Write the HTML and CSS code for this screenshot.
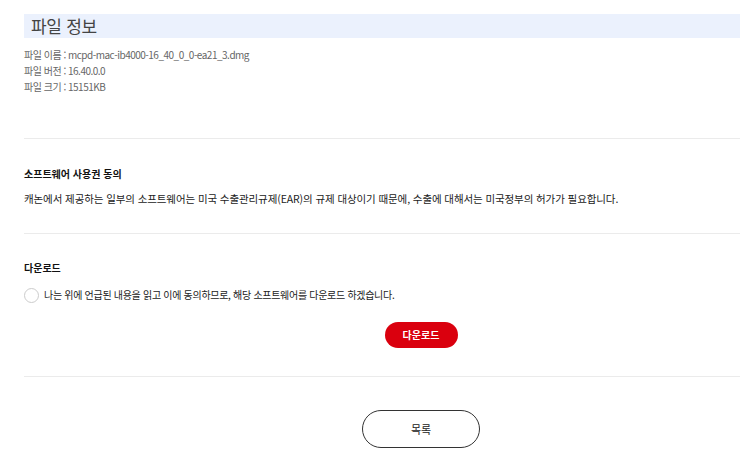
FILE: index.html
```html
<!DOCTYPE html>
<html lang="ko">
<head>
<meta charset="UTF-8">
<meta name="viewport" content="width=device-width, initial-scale=1.0">
<link rel="stylesheet" href="styles.css">
<title>파일 정보</title>
</head>
<body>
<div class="wrap">

  <!-- 파일 정보 -->
  <h2 class="title">파일 정보</h2>
  <ul class="info">
    <li>파일 이름 : mcpd-mac-ib4000-16_40_0_0-ea21_3.dmg</li>
    <li>파일 버전 : 16.40.0.0</li>
    <li>파일 크기 : 15151KB</li>
  </ul>

  <!-- 사용권 동의 -->
  <div class="section">
    <h3 class="sub">소프트웨어 사용권 동의</h3>
    <p class="desc">캐논에서 제공하는 일부의 소프트웨어는 미국 수출관리규제(EAR)의 규제 대상이기 때문에, 수출에 대해서는 미국정부의 허가가 필요합니다.</p>
  </div>

  <!-- 다운로드 -->
  <div class="section download">
    <h3 class="sub">다운로드</h3>
    <label class="agree">
      <span class="radio"></span>
      <span>나는 위에 언급된 내용을 읽고 이에 동의하므로, 해당 소프트웨어를 다운로드 하겠습니다.</span>
    </label>
    <div class="btn-row">
      <a class="btn-red" href="#">다운로드</a>
    </div>
  </div>

  <div class="section list-row">
    <a class="btn-line" href="#">목록</a>
  </div>

</div>
</body>
</html>
```

FILE: styles.css
```css
html, body {
  margin: 0;
  padding: 0;
  overflow: hidden;
  background: #fff;
}

body {
  font-family: "Noto Sans CJK KR", "Noto Sans", sans-serif;
  color: #222;
}

.wrap {
  width: 794px;
  margin-left: 24px;
}

.title {
  margin: 14px 0 0;
  height: 24px;
  line-height: 24px;
  padding-left: 7px;
  background: #ebf1fd;
  font-size: 17px;
  font-weight: normal;
  color: #444;
  letter-spacing: -0.3px;
}

.info {
  list-style: none;
  margin: 9px 0 0;
  padding: 0 0 43px;
  font-size: 10px;
  line-height: 16px;
  color: #666;
  letter-spacing: -0.5px;
}

.section {
  border-top: 1px solid #ebebeb;
  padding: 27px 0 26px;
}

.sub {
  margin: 0;
  font-size: 10px;
  line-height: 16px;
  font-weight: bold;
  color: #111;
}

.desc {
  margin: 9px 0 0;
  font-size: 10.5px;
  line-height: 16px;
  color: #222;
  letter-spacing: -0.1px;
}

.download {
  padding: 26px 0 28px;
}

.agree {
  display: flex;
  align-items: center;
  gap: 5px;
  margin-top: 11px;
  font-size: 10px;
  line-height: 16px;
  color: #222;
  letter-spacing: -0.3px;
}

.radio {
  width: 13px;
  height: 13px;
  border: 1px solid #ccc;
  border-radius: 50%;
  flex-shrink: 0;
}

.btn-row {
  display: flex;
  justify-content: center;
  margin-top: 19px;
}

.btn-red {
  display: block;
  width: 73px;
  height: 26px;
  line-height: 26px;
  border-radius: 13px;
  background: #da000e;
  color: #fff;
  text-align: center;
  font-size: 10px;
  font-weight: bold;
  text-decoration: none;
}

.list-row {
  display: flex;
  justify-content: center;
  padding: 33px 0 20px;
}

.btn-line {
  display: block;
  width: 116px;
  height: 36px;
  line-height: 36px;
  border: 1px solid #333;
  border-radius: 19px;
  color: #222;
  text-align: center;
  font-size: 11px;
  text-decoration: none;
}
```
